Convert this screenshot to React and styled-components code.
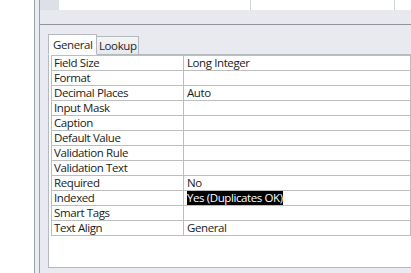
import React from "react";
import styled, { createGlobalStyle } from "styled-components";

const Global = createGlobalStyle`
  html, body { margin: 0; padding: 0; background: #ffffff; overflow: hidden; }
  body { font-family: "Open Sans", "Noto Sans", sans-serif; }
`;

const Screen = styled.div`
  display: flex;
  width: 411px;
  height: 273px;
  overflow: hidden;
  background: #ffffff;
`;

const LeftBlank = styled.div`
  width: 34px;
  flex: none;
  background: #ffffff;
`;

const Frame = styled.div`
  width: 4px;
  flex: none;
  border-left: 1px solid #9aa0a8;
  border-right: 1px solid #9aa0a8;
  background: #e9edf4;
`;

const Main = styled.div`
  flex: 1;
  display: flex;
  flex-direction: column;
  min-width: 0;
`;

const GridStrip = styled.div`
  height: 24px;
  flex: none;
  display: flex;
  flex-direction: column;
  background: #e7e9ee;
  border-bottom: 1px solid #8f949b;
`;

const GridRow = styled.div`
  display: flex;
  height: 10px;
`;

const RowHeader = styled.div`
  width: 19px;
  flex: none;
  background: #dde1e7;
`;

const GridCell = styled.div`
  width: ${(p) => p.$w}px;
  flex: none;
  background: #ffffff;
  border-right: 1px solid #cfd3d9;
`;

const Panel = styled.div`
  flex: 1;
  display: flex;
  flex-direction: column;
  background: #e8eaef;
  padding: 9px 0 5px 8px;
`;

const Tabs = styled.div`
  display: flex;
  align-items: flex-end;
  height: 21px;
  position: relative;
  z-index: 1;
  margin-bottom: -1px;
`;

const Tab = styled.div`
  box-sizing: border-box;
  height: ${(p) => (p.$active ? 21 : 19)}px;
  width: ${(p) => p.$w}px;
  padding: ${(p) => (p.$active ? "1px 0 0 4px" : "0 0 0 2px")};
  border: 1px solid #b4b8bf;
  border-bottom: ${(p) => (p.$active ? "1px solid #ffffff" : "1px solid #b4b8bf")};
  border-left: ${(p) => (p.$active ? "1px solid #b4b8bf" : "none")};
  background: ${(p) => (p.$active ? "#ffffff" : "linear-gradient(#f3f4f6, #e6e8ec)")};
  font-size: 11.5px;
  letter-spacing: -0.4px;
  line-height: 17px;
  color: #1e1e1e;
  white-space: nowrap;
`;

const TabBody = styled.div`
  flex: 1;
  background: #ffffff;
  border: 1px solid #b4b8bf;
  border-right: none;
  padding: 0 0 0 2px;
`;

const Table = styled.div`
  display: grid;
  grid-template-columns: 132px 1fr;
  border-top: 1px solid #bdbdbd;
  border-left: 1px solid #bdbdbd;
`;

const Cell = styled.div`
  box-sizing: border-box;
  height: 15px;
  border-right: 1px solid #bdbdbd;
  border-bottom: 1px solid #bdbdbd;
  padding-left: ${(p) => (p.$value ? 3 : 2)}px;
  font-size: 11.5px;
  letter-spacing: -0.4px;
  line-height: 14px;
  color: #1a1a1a;
  white-space: nowrap;
  overflow: hidden;
`;

const Selected = styled.span`
  background: #000000;
  color: #ffffff;
`;

const rows = [
  ["Field Size", "Long Integer"],
  ["Format", ""],
  ["Decimal Places", "Auto"],
  ["Input Mask", ""],
  ["Caption", ""],
  ["Default Value", ""],
  ["Validation Rule", ""],
  ["Validation Text", ""],
  ["Required", "No"],
  ["Indexed", "Yes (Duplicates OK)", true],
  ["Smart Tags", ""],
  ["Text Align", "General"],
];

export default function App() {
  return (
    <>
      <Global />
      <Screen>
        <LeftBlank />
        <Frame />
        <Main>
          <GridStrip>
            <GridRow>
              <RowHeader />
              <GridCell $w={191} />
              <GridCell $w={143} />
              <GridCell $w={40} />
            </GridRow>
          </GridStrip>
          <Panel>
            <Tabs>
              <Tab $active $w={49}>General</Tab>
              <Tab $w={42}>Lookup</Tab>
            </Tabs>
            <TabBody>
              <Table>
                {rows.map(([k, v, sel]) => (
                  <React.Fragment key={k}>
                    <Cell>{k}</Cell>
                    <Cell $value>{sel ? <Selected>{v}</Selected> : v}</Cell>
                  </React.Fragment>
                ))}
              </Table>
            </TabBody>
          </Panel>
        </Main>
      </Screen>
    </>
  );
}
